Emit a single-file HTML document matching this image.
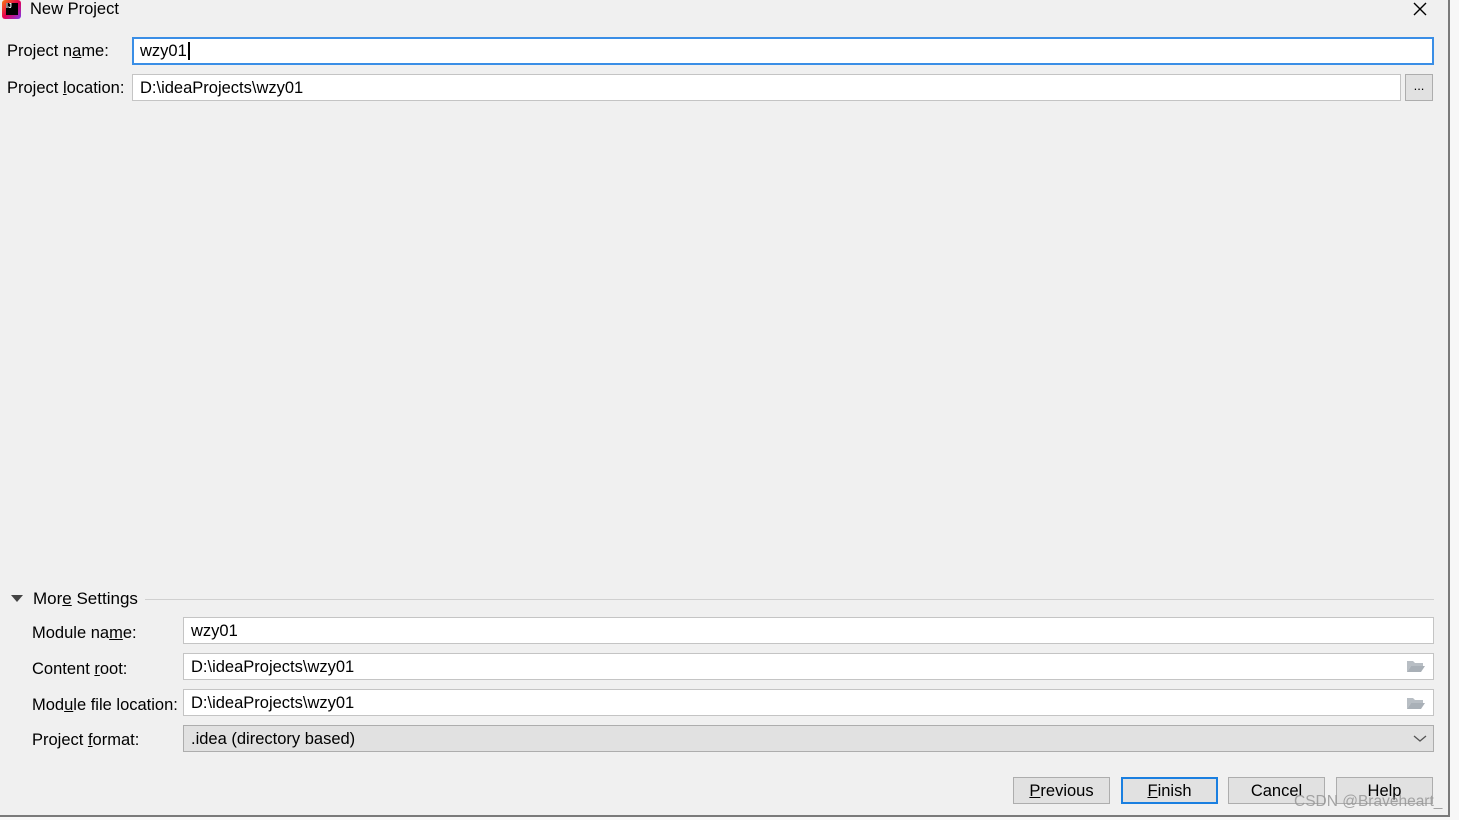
<!DOCTYPE html>
<html><head><meta charset="utf-8"><style>
body{margin:0;width:1459px;height:820px;background:#f7f7f7;font-family:"Liberation Sans","Noto Sans CJK SC",sans-serif;font-size:16.5px;color:#000;position:relative;overflow:hidden}
.win{position:absolute;left:0;top:0;width:1448px;height:815px;background:#f0f0f0;border-right:2px solid #7a7a7a;border-bottom:2px solid #7a7a7a}
.a{position:absolute;white-space:nowrap}
.f{position:absolute;background:#fff;border:1px solid #c4c4c4;box-sizing:border-box;padding-left:7px;line-height:27px}
.btn{position:absolute;top:777px;height:27px;width:97px;box-sizing:border-box;border:1px solid #adadad;background:#e1e1e1;text-align:center;line-height:26px;font-size:16.5px}
u{text-decoration:underline}
</style></head><body>
<div class="win">
<div class="a" style="left:2px;top:0;width:19px;height:19px;background:linear-gradient(135deg,#f97a12,#e5004f 50%,#7c3aed);border-radius:3px"><div style="position:absolute;left:4px;top:3px;width:12px;height:12px;background:#000;color:#fff;font-size:7px;font-weight:bold;line-height:8px">IJ</div></div>
<div class="a" style="left:30px;top:0px;font-size:16.5px">New Project</div>
<svg class="a" style="left:1413px;top:2px" width="14" height="14"><path d="M1 1l12 12M13 1L1 13" stroke="#000" stroke-width="1.4"/></svg>

<div class="a" style="left:7px;top:42px">Project n<u>a</u>me:</div>
<div class="f" style="left:132px;top:37px;width:1302px;height:28px;border:2px solid #3a8ee6;padding-left:6px;line-height:25px">wzy01<span style="border-left:2px solid #000;margin-left:1px"></span></div>
<div class="a" style="left:7px;top:79px">Project <u>l</u>ocation:</div>
<div class="f" style="left:132px;top:74px;width:1269px;height:27px">D:\ideaProjects\wzy01</div>
<div class="a" style="left:1405px;top:74px;width:28px;height:27px;background:#e1e1e1;border:1px solid #adadad;box-sizing:border-box;text-align:center;line-height:22px;font-size:13px">...</div>

<div class="a" style="left:11px;top:595px;width:0;height:0;border-left:6px solid transparent;border-right:6px solid transparent;border-top:7px solid #444"></div>
<div class="a" style="left:33px;top:589px;font-size:17px">Mor<u>e</u> Settings</div>
<div class="a" style="left:145px;top:599px;width:1289px;height:1px;background:#d0d0d0"></div>

<div class="a" style="left:32px;top:624px">Module na<u>m</u>e:</div>
<div class="f" style="left:183px;top:617px;width:1251px;height:27px">wzy01</div>
<div class="a" style="left:32px;top:660px">Content <u>r</u>oot:</div>
<div class="f" style="left:183px;top:653px;width:1251px;height:27px">D:\ideaProjects\wzy01</div>
<div class="a" style="left:32px;top:696px">Mod<u>u</u>le file location:</div>
<div class="f" style="left:183px;top:689px;width:1251px;height:27px">D:\ideaProjects\wzy01</div>
<svg class="a" style="left:1406px;top:659px" width="20" height="14"><path d="M1 2h6l2 2h8v3H5L1 13z" fill="#b8bec4"/><path d="M5 7h14l-4 6H1z" fill="#a9b0b7"/></svg>
<svg class="a" style="left:1406px;top:696px" width="20" height="14"><path d="M1 2h6l2 2h8v3H5L1 13z" fill="#b8bec4"/><path d="M5 7h14l-4 6H1z" fill="#a9b0b7"/></svg>
<div class="a" style="left:32px;top:731px">Project <u>f</u>ormat:</div>
<div class="f" style="left:183px;top:725px;width:1251px;height:27px;background:#e1e1e1;border-color:#adadad">.idea (directory based)</div>
<svg class="a" style="left:1413px;top:734px" width="14" height="9"><path d="M1 2l6 5 6-5" fill="none" stroke="#555" stroke-width="1.3"/></svg>

<div class="btn" style="left:1013px"><u>P</u>revious</div>
<div class="btn" style="left:1121px;border:2px solid #1a7fe0;line-height:24px"><u>F</u>inish</div>
<div class="btn" style="left:1228px">Cancel</div>
<div class="btn" style="left:1336px">Help</div>
<div class="a" style="left:1294px;top:793px;color:rgba(150,150,150,0.85);font-size:15.5px">CSDN @Braveheart_</div>
</div>
</body></html>
